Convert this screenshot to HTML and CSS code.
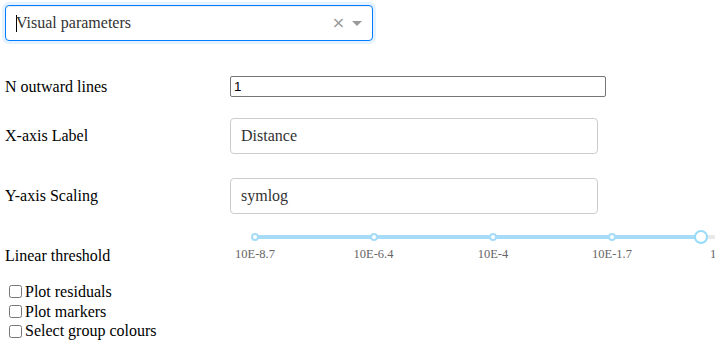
FILE: index.html
```html
<!DOCTYPE html>
<html>
<head>
<meta charset="utf-8">
<link rel="stylesheet" href="styles.css">
</head>
<body>
<div class="page">
  <div class="select">
    <div class="select-value"><span class="caret"></span>Visual parameters</div>
    <span class="select-clear">×</span>
    <span class="select-arrow-zone"><span class="select-arrow"></span></span>
  </div>

  <div class="row row-n">
    <label class="row-label">N outward lines</label>
    <input class="plain-input" type="text" value="1">
  </div>

  <div class="row row-x">
    <label class="row-label">X-axis Label</label>
    <input class="text-input" type="text" value="Distance">
  </div>

  <div class="row row-y">
    <label class="row-label">Y-axis Scaling</label>
    <input class="text-input" type="text" value="symlog">
  </div>

  <div class="row row-slider">
    <label class="row-label">Linear threshold</label>
    <div class="slider">
      <div class="rail"></div>
      <div class="track"></div>
      <span class="dot m0"></span>
      <span class="dot m1"></span>
      <span class="dot m2"></span>
      <span class="dot m3"></span>
      <span class="handle"></span>
      <span class="mark m0">10E-8.7</span>
      <span class="mark m1">10E-6.4</span>
      <span class="mark m2">10E-4</span>
      <span class="mark m3">10E-1.7</span>
      <span class="mark m4">1</span>
    </div>
  </div>

  <div class="checks">
    <label class="check"><input type="checkbox">Plot residuals</label>
    <label class="check"><input type="checkbox">Plot markers</label>
    <label class="check"><input type="checkbox">Select group colours</label>
  </div>
</div>
</body>
</html>
```

FILE: styles.css
```css
html, body {
  margin: 0;
  padding: 0;
  overflow: hidden;
  background: #fff;
}

body {
  font-family: "Liberation Serif", "Times New Roman", serif;
  font-size: 16px;
  color: #000;
}

.page {
  padding: 5px;
  width: 705px;
}

/* dropdown */
.select {
  box-sizing: border-box;
  width: 368px;
  height: 36px;
  border: 1px solid #007eff;
  border-radius: 4px;
  box-shadow: inset 0 1px 1px rgba(0, 0, 0, 0.075), 0 0 0 3px rgba(0, 126, 255, 0.1);
  display: flex;
  align-items: center;
  background: #fff;
}

.select-value {
  flex: 1;
  padding-left: 10px;
  color: #333;
  display: flex;
  align-items: center;
}

.caret {
  display: inline-block;
  width: 1px;
  height: 17px;
  background: #000;
  margin-right: -1px;
}

.select-clear {
  width: 17px;
  text-align: center;
  color: #999;
  font-family: "DejaVu Sans", sans-serif;
  font-size: 16px;
  line-height: 1;
  margin-left: 3px;
}

.select-arrow-zone {
  width: 20px;
  padding-right: 5px;
  display: flex;
  justify-content: center;
  align-items: center;
}

.select-arrow {
  width: 0;
  height: 0;
  border-style: solid;
  border-width: 5px 5px 2.5px;
  border-color: #999 transparent transparent;
  margin-top: 3px;
}

/* rows */
.row {
  display: flex;
  align-items: center;
}

.row-label {
  width: 225px;
  flex: none;
}

.row-n {
  margin-top: 35px;
  height: 21px;
}

.row-x {
  margin-top: 21px;
}

.row-y {
  margin-top: 24px;
}

.plain-input {
  box-sizing: border-box;
  width: 376px;
  height: 21px;
  margin: 0;
  border: 1px solid #767676;
  border-radius: 2px;
  padding: 1px 3px;
  font-family: "Liberation Sans", Arial, sans-serif;
  font-size: 13.33px;
  color: #000;
}

.text-input {
  box-sizing: border-box;
  width: 368px;
  height: 36px;
  margin: 0;
  border: 1px solid #ccc;
  border-radius: 4px;
  padding: 0 10px;
  font-family: "Liberation Serif", "Times New Roman", serif;
  font-size: 16px;
  color: #333;
  background: #fff;
}

/* slider */
.row-slider {
  margin-top: 16px;
  height: 52px;
}

.slider {
  position: relative;
  align-self: flex-start;
  margin-left: 25px;
  width: 476px;
  height: 40px;
  flex: none;
}

.rail {
  position: absolute;
  left: 0;
  right: 0;
  top: 5px;
  height: 4px;
  background: #e9e9e9;
  border-radius: 2px;
}

.track {
  position: absolute;
  left: 0;
  top: 5px;
  width: 446px;
  height: 4px;
  background: #a6dcf7;
  border-radius: 2px;
}

.dot {
  position: absolute;
  top: 3px;
  width: 4px;
  height: 4px;
  margin-left: -4px;
  border: 2px solid #a6dcf7;
  border-radius: 50%;
  background: #fff;
}

.handle {
  position: absolute;
  left: 446px;
  top: 0;
  width: 10px;
  height: 10px;
  margin-left: -7px;
  border: 2px solid #96dbfa;
  border-radius: 50%;
  background: #fff;
}

.dot.m0 { left: 0; }
.dot.m1 { left: 118.5px; }
.dot.m2 { left: 238px; }
.dot.m3 { left: 357px; }

.mark {
  position: absolute;
  top: 17px;
  font-size: 12.5px;
  color: #666;
  transform: translateX(-50%);
  white-space: nowrap;
}

.mark.m0 { left: 0; }
.mark.m1 { left: 118.5px; }
.mark.m2 { left: 238px; }
.mark.m3 { left: 357px; }
.mark.m4 { left: 458px; }

/* checkboxes */
.checks {
  display: flex;
  flex-direction: column;
}

.check {
  display: flex;
  align-items: center;
  height: 19.7px;
}

.check input {
  width: 13px;
  height: 13px;
  margin: 3px 3px 3px 4px;
}
```
